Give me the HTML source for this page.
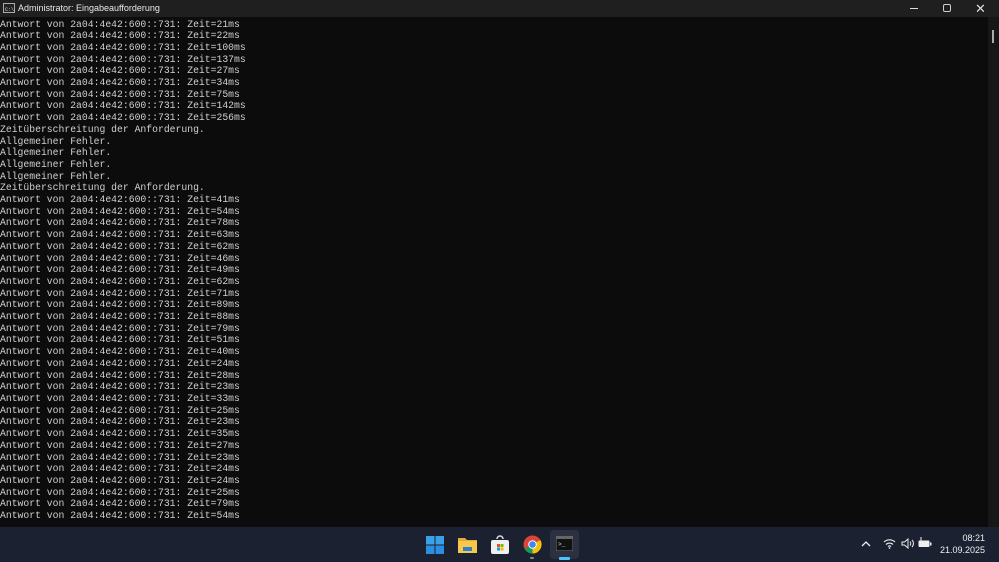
<!DOCTYPE html><html><head><style>
*{margin:0;padding:0;box-sizing:border-box}
body{width:999px;height:562px;overflow:hidden;background:#0c0c0c;position:relative;font-family:"Liberation Sans",sans-serif}
#tb{position:absolute;left:0;top:0;width:999px;height:17px;background:#1f1f1f;color:#e8e8e8;font-size:9px;line-height:17px}
#con{position:absolute;left:0;top:18.5px;width:988px;height:508px;color:#d0d0d0;font-family:"Liberation Mono",monospace;font-size:9.75px;line-height:11.71px;white-space:pre;overflow:hidden}
#sb{position:absolute;left:988px;top:17px;width:11px;height:510px;background:#171717}
#task{position:absolute;left:0;top:527px;width:999px;height:35px;background:#1b2130}
</style></head><body>
<div id="tb"><svg style="position:absolute;left:3px;top:3px" width="12" height="10"><rect x=".5" y=".5" width="11" height="9" fill="#222" stroke="#aaa"/><text x="2" y="8" font-size="5" fill="#ddd" font-family="Liberation Mono">C:\</text></svg><span style="position:absolute;left:18px">Administrator: Eingabeaufforderung</span>
<div style="position:absolute;left:910px;top:8px;width:8px;height:1px;background:#ddd"></div>
<div style="position:absolute;left:943px;top:4px;width:8px;height:8px;border:1px solid #ccc;border-radius:2px"></div>
<span style="position:absolute;left:975px;top:0;font-size:13px;color:#ddd">✕</span></div>
<div id="con">Antwort von 2a04:4e42:600::731: Zeit=21ms
Antwort von 2a04:4e42:600::731: Zeit=22ms
Antwort von 2a04:4e42:600::731: Zeit=100ms
Antwort von 2a04:4e42:600::731: Zeit=137ms
Antwort von 2a04:4e42:600::731: Zeit=27ms
Antwort von 2a04:4e42:600::731: Zeit=34ms
Antwort von 2a04:4e42:600::731: Zeit=75ms
Antwort von 2a04:4e42:600::731: Zeit=142ms
Antwort von 2a04:4e42:600::731: Zeit=256ms
Zeitüberschreitung der Anforderung.
Allgemeiner Fehler.
Allgemeiner Fehler.
Allgemeiner Fehler.
Allgemeiner Fehler.
Zeitüberschreitung der Anforderung.
Antwort von 2a04:4e42:600::731: Zeit=41ms
Antwort von 2a04:4e42:600::731: Zeit=54ms
Antwort von 2a04:4e42:600::731: Zeit=78ms
Antwort von 2a04:4e42:600::731: Zeit=63ms
Antwort von 2a04:4e42:600::731: Zeit=62ms
Antwort von 2a04:4e42:600::731: Zeit=46ms
Antwort von 2a04:4e42:600::731: Zeit=49ms
Antwort von 2a04:4e42:600::731: Zeit=62ms
Antwort von 2a04:4e42:600::731: Zeit=71ms
Antwort von 2a04:4e42:600::731: Zeit=89ms
Antwort von 2a04:4e42:600::731: Zeit=88ms
Antwort von 2a04:4e42:600::731: Zeit=79ms
Antwort von 2a04:4e42:600::731: Zeit=51ms
Antwort von 2a04:4e42:600::731: Zeit=40ms
Antwort von 2a04:4e42:600::731: Zeit=24ms
Antwort von 2a04:4e42:600::731: Zeit=28ms
Antwort von 2a04:4e42:600::731: Zeit=23ms
Antwort von 2a04:4e42:600::731: Zeit=33ms
Antwort von 2a04:4e42:600::731: Zeit=25ms
Antwort von 2a04:4e42:600::731: Zeit=23ms
Antwort von 2a04:4e42:600::731: Zeit=35ms
Antwort von 2a04:4e42:600::731: Zeit=27ms
Antwort von 2a04:4e42:600::731: Zeit=23ms
Antwort von 2a04:4e42:600::731: Zeit=24ms
Antwort von 2a04:4e42:600::731: Zeit=24ms
Antwort von 2a04:4e42:600::731: Zeit=25ms
Antwort von 2a04:4e42:600::731: Zeit=79ms
Antwort von 2a04:4e42:600::731: Zeit=54ms</div>
<div id="sb"><div style="position:absolute;left:4px;top:13px;width:2px;height:13px;background:#aaa"></div></div>
<div id="task">
<svg style="position:absolute;left:426px;top:9px" width="18" height="18"><rect x="0" y="0" width="8.5" height="8.5" fill="#3aa0e8"/><rect x="9.5" y="0" width="8.5" height="8.5" fill="#3aa0e8"/><rect x="0" y="9.5" width="8.5" height="8.5" fill="#2b8ee0"/><rect x="9.5" y="9.5" width="8.5" height="8.5" fill="#2b8ee0"/></svg>
<svg style="position:absolute;left:458px;top:9px" width="19" height="17"><path d="M0 2h7l2 2h10v13H0z" fill="#e8a93a"/><rect x="0" y="5" width="19" height="12" fill="#f7c948"/><rect x="5" y="11" width="9" height="4" fill="#2a7fd4"/></svg>
<svg style="position:absolute;left:491px;top:8px" width="18" height="19"><path d="M6 4a3 3 0 0 1 6 0" stroke="#ddd" fill="none" stroke-width="1.5"/><rect x="0" y="5" width="18" height="14" rx="2" fill="#f0f0f0"/><rect x="6" y="9" width="3" height="3" fill="#f25022"/><rect x="9.5" y="9" width="3" height="3" fill="#7fba00"/><rect x="6" y="12.5" width="3" height="3" fill="#00a4ef"/><rect x="9.5" y="12.5" width="3" height="3" fill="#ffb900"/></svg>
<svg style="position:absolute;left:523px;top:8px" width="19" height="19"><circle cx="9.5" cy="9.5" r="9" fill="#db4437"/><path d="M9.5 9.5L1.7 14A9 9 0 0 0 9.5 18.5Z" fill="#0f9d58"/><path d="M9.5 9.5L9.5 18.5A9 9 0 0 0 17.3 5Z" fill="#f4c20d"/><circle cx="9.5" cy="9.5" r="4.3" fill="#fff"/><circle cx="9.5" cy="9.5" r="3.3" fill="#4285f4"/></svg>
<div style="position:absolute;left:530px;top:30px;width:4px;height:2px;background:#888;border-radius:1px"></div>
<div style="position:absolute;left:550px;top:3px;width:29px;height:29px;background:#2b3140;border-radius:4px"></div>
<svg style="position:absolute;left:556px;top:9px" width="17" height="15"><rect x="0" y="0" width="17" height="15" fill="#111" stroke="#777"/><rect x="0" y="0" width="17" height="3" fill="#666"/><text x="2" y="10" font-size="6" fill="#ddd" font-family="Liberation Mono">&gt;_</text></svg>
<div style="position:absolute;left:559px;top:30px;width:11px;height:3px;background:#4cc2ff;border-radius:1px"></div>
<svg style="position:absolute;left:861px;top:14px" width="10" height="6"><path d="M1 5L5 1L9 5" stroke="#eee" stroke-width="1.3" fill="none"/></svg>
<svg style="position:absolute;left:883px;top:11px" width="13" height="11"><path d="M1 4a8 8 0 0 1 11 0M3 6.5a5 5 0 0 1 7 0M5 8.5a2.2 2.2 0 0 1 3 0" stroke="#eee" stroke-width="1.2" fill="none"/><circle cx="6.5" cy="10" r="0.9" fill="#eee"/></svg>
<svg style="position:absolute;left:901px;top:11px" width="14" height="11"><path d="M1 4h2.5L7 1v9L3.5 7H1z" stroke="#eee" fill="none"/><path d="M9 3.5a3 3 0 0 1 0 4M11 2a5 5 0 0 1 0 7" stroke="#eee" fill="none"/></svg>
<svg style="position:absolute;left:918px;top:10px" width="14" height="11"><path d="M3 0v4" stroke="#eee"/><rect x="0.5" y="3.5" width="11" height="6.5" rx="1" fill="#eee"/><rect x="12" y="5.5" width="1.5" height="3" fill="#eee"/></svg>
<div style="position:absolute;left:930px;top:5px;width:55px;text-align:right;color:#eee;font-size:9px;line-height:12px">08:21<br>21.09.2025</div>
</div>
</body></html>
